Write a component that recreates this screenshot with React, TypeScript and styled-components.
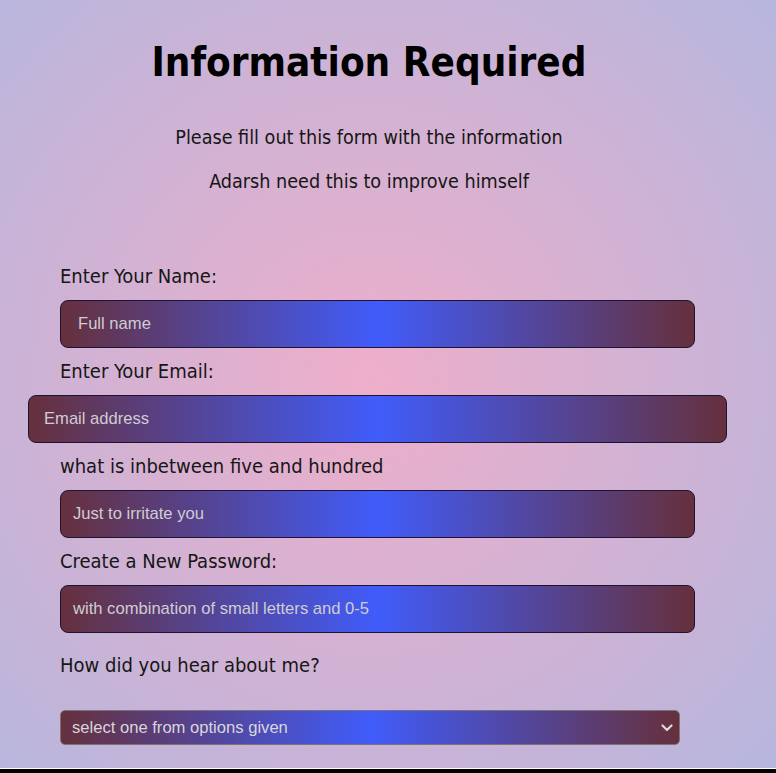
import React from 'react';
import styled, { createGlobalStyle } from 'styled-components';

const GlobalStyle = createGlobalStyle`
  html {
    background: #000;
  }
  body {
    margin: 0;
    font-family: 'DejaVu Sans Condensed', 'DejaVu Sans', sans-serif;
    color: #161616;
  }
`;

const Page = styled.div`
  box-sizing: border-box;
  height: 769px;
  border-bottom: 1px solid #fff;
  padding-top: 38px;
  background: radial-gradient(circle 900px at 370px 380px, #eeaeca 0%, #94bbe9 100%);
  overflow: hidden;
`;

const Header = styled.header`
  width: 738px;
  text-align: center;
`;

const Title = styled.h1`
  margin: 0;
  font-size: 40px;
  line-height: 48px;
  font-weight: bold;
  color: #000;
`;

const Subtitle = styled.p<{ $gap: number }>`
  margin: ${(p) => p.$gap}px 0 0;
  font-size: 19.6px;
  line-height: 24px;
`;

const Form = styled.form`
  padding-left: 60px;
  padding-top: 59px;
`;

const Label = styled.label`
  display: block;
  font-size: 20px;
  line-height: 24px;
  margin: 11px 0 12px;
`;

const Field = styled.input<{ $shift?: number; $width: number; $pad: number }>`
  display: block;
  box-sizing: border-box;
  width: ${(p) => p.$width}px;
  height: 48px;
  margin-left: ${(p) => -(p.$shift ?? 0)}px;
  padding: 0 0 0 ${(p) => p.$pad}px;
  border: 1px solid #1d1433;
  border-radius: 8px;
  background: linear-gradient(90deg, #66303d 0%, #405cfa 50%, #66303d 100%);
  font-family: 'Liberation Sans', Arial, sans-serif;
  font-size: 16.6px;
  color: #e6e6e6;
  outline: none;

  &::placeholder {
    color: #cfcdd3;
  }
`;

const Question = styled(Label)`
  margin: 20px 0 33px;
`;

const ChoiceWrap = styled.div`
  position: relative;
  width: 620px;
`;

const Choice = styled.select`
  display: block;
  box-sizing: border-box;
  width: 100%;
  height: 35px;
  padding: 0 30px 0 11px;
  border: 1px solid #7a7278;
  border-radius: 5px;
  appearance: none;
  background: linear-gradient(90deg, #66303d 0%, #405cfa 50%, #66303d 100%);
  font-family: 'Liberation Sans', Arial, sans-serif;
  font-size: 16.6px;
  color: #d8d6dc;
  outline: none;
`;

const Chevron = styled.svg`
  position: absolute;
  right: 7px;
  top: 14px;
  width: 12px;
  height: 8px;
  pointer-events: none;
`;

function App(): JSX.Element {
  return (
    <>
      <GlobalStyle />
      <Page>
        <Header>
          <Title>Information Required</Title>
          <Subtitle $gap={40}>Please fill out this form with the information</Subtitle>
          <Subtitle $gap={20}>Adarsh need this to improve himself</Subtitle>
        </Header>
        <Form>
          <Label htmlFor="name">Enter Your Name:</Label>
          <Field id="name" type="text" placeholder="Full name" $width={635} $pad={17} />
          <Label htmlFor="email">Enter Your Email:</Label>
          <Field id="email" type="email" placeholder="Email address" $width={699} $shift={32} $pad={15} />
          <Label htmlFor="number">what is inbetween five and hundred</Label>
          <Field id="number" type="text" placeholder="Just to irritate you" $width={635} $pad={12} />
          <Label htmlFor="password">Create a New Password:</Label>
          <Field id="password" type="password" placeholder="with combination of small letters and 0-5" $width={635} $pad={12} />
          <Question htmlFor="source">How did you hear about me?</Question>
          <ChoiceWrap>
            <Choice id="source" defaultValue="">
              <option value="" disabled>
                select one from options given
              </option>
              <option value="friend">From a friend</option>
              <option value="social">Social media</option>
              <option value="other">Other</option>
            </Choice>
            <Chevron viewBox="0 0 12 8" fill="none">
              <path d="M1.5 1.5 6 6l4.5-4.5" stroke="#dcd8e0" strokeWidth="2.2" strokeLinecap="round" strokeLinejoin="round" />
            </Chevron>
          </ChoiceWrap>
        </Form>
      </Page>
    </>
  );
}

export default App;
